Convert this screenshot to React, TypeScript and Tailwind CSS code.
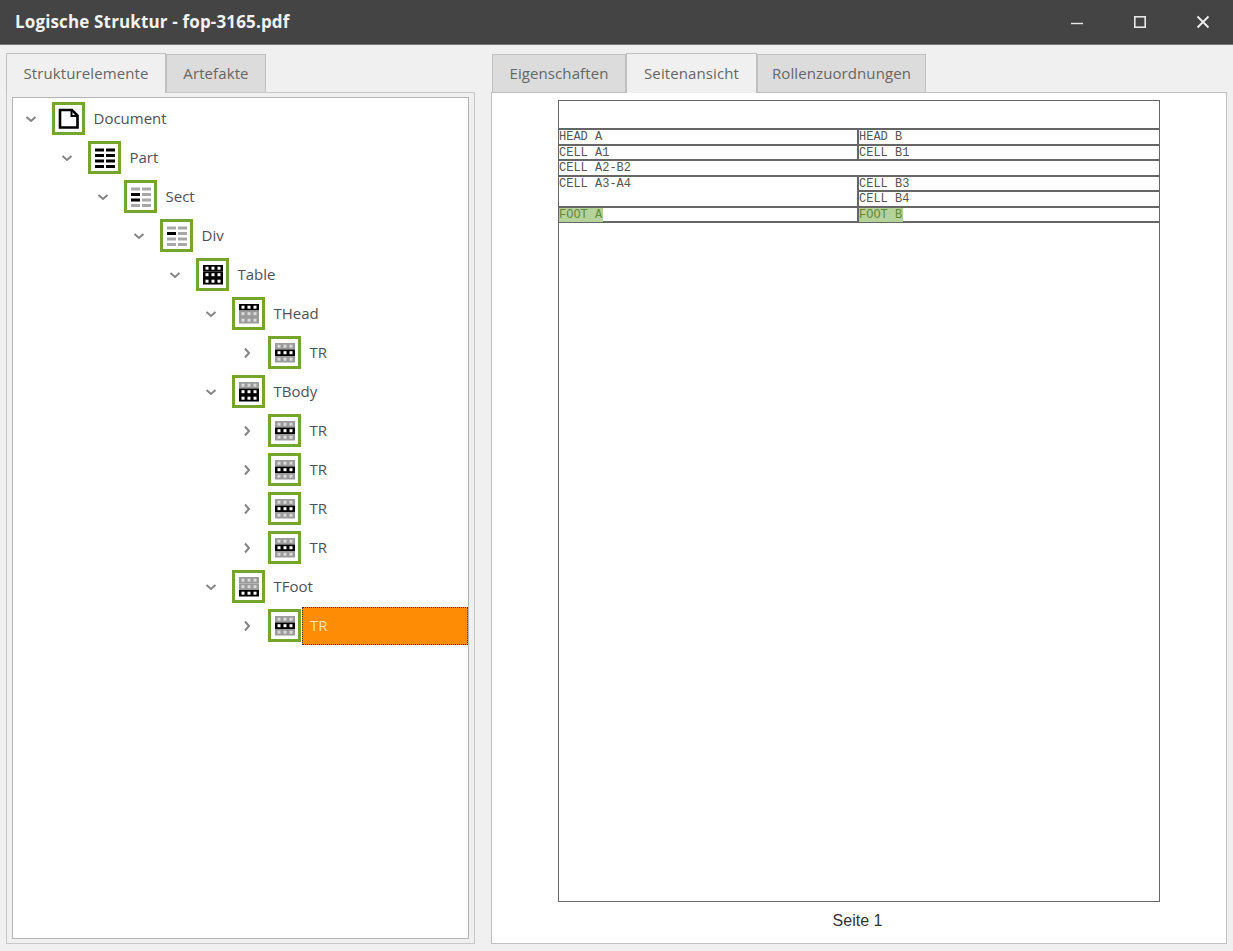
import React from 'react';

type IconKind = 'document' | 'part' | 'sect' | 'div' | 'table' | 'thead' | 'tbody' | 'tfoot' | 'tr';

interface TreeNode {
  label: string;
  depth: number;
  icon: IconKind;
  open: boolean;
  selected?: boolean;
}

const nodes: TreeNode[] = [
  { label: 'Document', depth: 0, icon: 'document', open: true },
  { label: 'Part', depth: 1, icon: 'part', open: true },
  { label: 'Sect', depth: 2, icon: 'sect', open: true },
  { label: 'Div', depth: 3, icon: 'div', open: true },
  { label: 'Table', depth: 4, icon: 'table', open: true },
  { label: 'THead', depth: 5, icon: 'thead', open: true },
  { label: 'TR', depth: 6, icon: 'tr', open: false },
  { label: 'TBody', depth: 5, icon: 'tbody', open: true },
  { label: 'TR', depth: 6, icon: 'tr', open: false },
  { label: 'TR', depth: 6, icon: 'tr', open: false },
  { label: 'TR', depth: 6, icon: 'tr', open: false },
  { label: 'TR', depth: 6, icon: 'tr', open: false },
  { label: 'TFoot', depth: 5, icon: 'tfoot', open: true },
  { label: 'TR', depth: 6, icon: 'tr', open: false, selected: true },
];

const BLACK = '#000000';
const GREY = '#9a9a9a';

// raster der kleinen tabellen-icons: zeilen mit schwarz oder grau
function GridGlyph({ rows }: { rows: boolean[] }) {
  const ys = [7, 13.5, 20];
  return (
    <g>
      {rows.map((dark, i) => (
        <rect key={i} x="7" y={ys[i]} width="20" height="6.5" fill={dark ? BLACK : GREY} />
      ))}
      {rows.map((dark, i) =>
        [9.5, 15.5, 21.5].map((x) => (
          <rect key={`${i}-${x}`} x={x} y={ys[i] + 1.7} width="3" height="3" fill={dark ? '#ffffff' : '#dadada'} />
        ))
      )}
    </g>
  );
}

// zwei spalten mit vier balken
function BarsGlyph({ dark }: { dark: (row: number, col: number) => boolean }) {
  return (
    <g>
      {[0, 1, 2, 3].map((row) =>
        [0, 1].map((col) => (
          <rect
            key={`${row}-${col}`}
            x={col === 0 ? 7 : 18}
            y={7.5 + row * 5.5}
            width="9"
            height="3"
            fill={dark(row, col) ? BLACK : '#a8a8a8'}
          />
        ))
      )}
    </g>
  );
}

function NodeIcon({ kind }: { kind: IconKind }) {
  return (
    <svg width="33" height="33" viewBox="0 0 33 33" className="shrink-0">
      <rect x="1.5" y="1.5" width="30" height="30" fill="#ffffff" stroke="#76a52e" strokeWidth="3" />
      {kind === 'document' && (
        <g fill="none" stroke="#000000" strokeWidth="2.6">
          <path d="M8 8H20L25.5 13.5V25.5H8Z" />
          <path d="M19.5 8V14H25.5" strokeWidth="2" />
        </g>
      )}
      {kind === 'part' && <BarsGlyph dark={() => true} />}
      {kind === 'sect' && <BarsGlyph dark={(r, c) => c === 0 && (r === 1 || r === 2)} />}
      {kind === 'div' && <BarsGlyph dark={(r, c) => c === 0 && r === 1} />}
      {kind === 'table' && <GridGlyph rows={[true, true, true]} />}
      {kind === 'thead' && <GridGlyph rows={[true, false, false]} />}
      {kind === 'tbody' && <GridGlyph rows={[false, true, true]} />}
      {kind === 'tfoot' && <GridGlyph rows={[false, false, true]} />}
      {kind === 'tr' && <GridGlyph rows={[false, true, false]} />}
    </svg>
  );
}

function Chevron({ open }: { open: boolean }) {
  return (
    <svg width="12" height="12" viewBox="0 0 12 12" fill="none" stroke="#858585" strokeWidth="2">
      {open ? <path d="M1.5 4L6 8L10.5 4" /> : <path d="M4 1.5L8 6L4 10.5" />}
    </svg>
  );
}

function TreeRow({ node }: { node: TreeNode }) {
  return (
    <div className="flex h-[39px] items-center" style={{ paddingLeft: node.depth * 36 }}>
      <div className="flex w-[36px] shrink-0 justify-center">
        <Chevron open={node.open} />
      </div>
      <div className="ml-[3px]">
        <NodeIcon kind={node.icon} />
      </div>
      {node.selected ? (
        <div className="ml-px flex h-[38px] flex-1 items-center border border-dotted border-[#333] bg-[#ff8c05] pl-[7px] text-[#ffe3b8]">
          {node.label}
        </div>
      ) : (
        <div className="ml-px pl-[7.5px]">{node.label}</div>
      )}
    </div>
  );
}

function Tab({ label, active, width }: { label: string; active?: boolean; width: string }) {
  return (
    <div
      className={`flex items-center justify-center border border-b-0 border-[#c0c0c0] text-[15px] tracking-[0.1px] text-[#666] ${width} ${
        active ? 'relative z-10 -mb-px h-[40px] bg-[#f0f0f0]' : 'h-[38px] bg-[#dcdcdc]'
      }`}
    >
      {label}
    </div>
  );
}

const lineCell = 'border-t-2 border-[#666] pt-px whitespace-nowrap text-[12px] leading-[13px]';
const footCell = '-mt-px h-[14px] w-[44px] bg-[#b4d29a] pt-px text-[#5f8a3a]';

function PreviewTable() {
  return (
    <div className="mt-[27px] grid grid-cols-[298px_302px] grid-rows-[16px_15px_16px_15px_16px_15px] border-b-2 border-[#666] font-['Liberation_Mono',monospace] text-[#555]">
      <div className={lineCell}>HEAD A</div>
      <div className={`${lineCell} border-l-2`}>HEAD B</div>
      <div className={lineCell}>CELL A1</div>
      <div className={`${lineCell} border-l-2`}>CELL B1</div>
      <div className={`${lineCell} col-span-2`}>CELL A2-B2</div>
      <div className={`${lineCell} row-span-2`}>CELL A3-A4</div>
      <div className={`${lineCell} border-l-2`}>CELL B3</div>
      <div className={`${lineCell} border-l-2`}>CELL B4</div>
      <div className={lineCell}>
        <div className={footCell}>FOOT A</div>
      </div>
      <div className={`${lineCell} border-l-2`}>
        <div className={footCell}>FOOT B</div>
      </div>
    </div>
  );
}

export default function App() {
  return (
    <div className="flex h-screen flex-col overflow-hidden bg-[#f0f0f0] font-['Open_Sans',sans-serif]">
      {/* Titelleiste */}
      <header className="flex h-[45px] shrink-0 items-center justify-between border-b border-[#777] bg-[#444444] pl-[15px] pr-[23px]">
        <h1 className="text-[17px] font-bold tracking-[0.15px] text-[#f2f2f2]">Logische Struktur - fop-3165.pdf</h1>
        <div className="flex items-center gap-[49px]">
          <svg width="14" height="14" viewBox="0 0 14 14" stroke="#e8e8e8" strokeWidth="1.4" fill="none">
            <path d="M1 8.5H13" />
          </svg>
          <svg width="14" height="14" viewBox="0 0 14 14" stroke="#e8e8e8" strokeWidth="1.6" fill="none">
            <rect x="1.8" y="1.8" width="10.4" height="10.4" />
          </svg>
          <svg width="14" height="14" viewBox="0 0 14 14" stroke="#f0f0f0" strokeWidth="1.8" fill="none">
            <path d="M1.5 1.5L12.5 12.5M12.5 1.5L1.5 12.5" />
          </svg>
        </div>
      </header>

      <main className="flex flex-1 gap-[16px] pb-[7px] pl-[6px] pt-[7px]">
        {/* Linke Seite: Strukturbaum */}
        <section className="flex w-[469px] flex-col">
          <div className="flex h-[40px] items-end">
            <Tab label="Strukturelemente" active width="w-[160px]" />
            <Tab label="Artefakte" width="w-[100px]" />
          </div>
          <div className="flex-1 border border-[#c8c8c8] bg-[#f0f0f0] pb-[4px] pl-[5px] pr-[5px] pt-[4px]">
            <div className="h-full border border-[#b4b4b4] bg-white pt-[1px] text-[15px] text-[#4f4f5c]">
              {nodes.map((node, i) => (
                <TreeRow key={i} node={node} />
              ))}
            </div>
          </div>
        </section>

        {/* Rechte Seite: Seitenansicht */}
        <section className="flex w-[736px] flex-col">
          <div className="flex h-[40px] items-end pl-px">
            <Tab label="Eigenschaften" width="w-[134px]" />
            <Tab label="Seitenansicht" active width="w-[131px]" />
            <Tab label="Rollenzuordnungen" width="w-[169px]" />
          </div>
          <div className="flex flex-1 flex-col items-center border border-[#c0c0c0] bg-white pt-[7px]">
            <div className="h-[802px] w-[602px] border border-[#666]">
              <PreviewTable />
            </div>
            <div className="mt-[10px] pr-[3px] font-['Liberation_Sans',sans-serif] text-[16px] leading-[18px] text-[#333]">
              Seite 1
            </div>
          </div>
        </section>
      </main>
    </div>
  );
}
